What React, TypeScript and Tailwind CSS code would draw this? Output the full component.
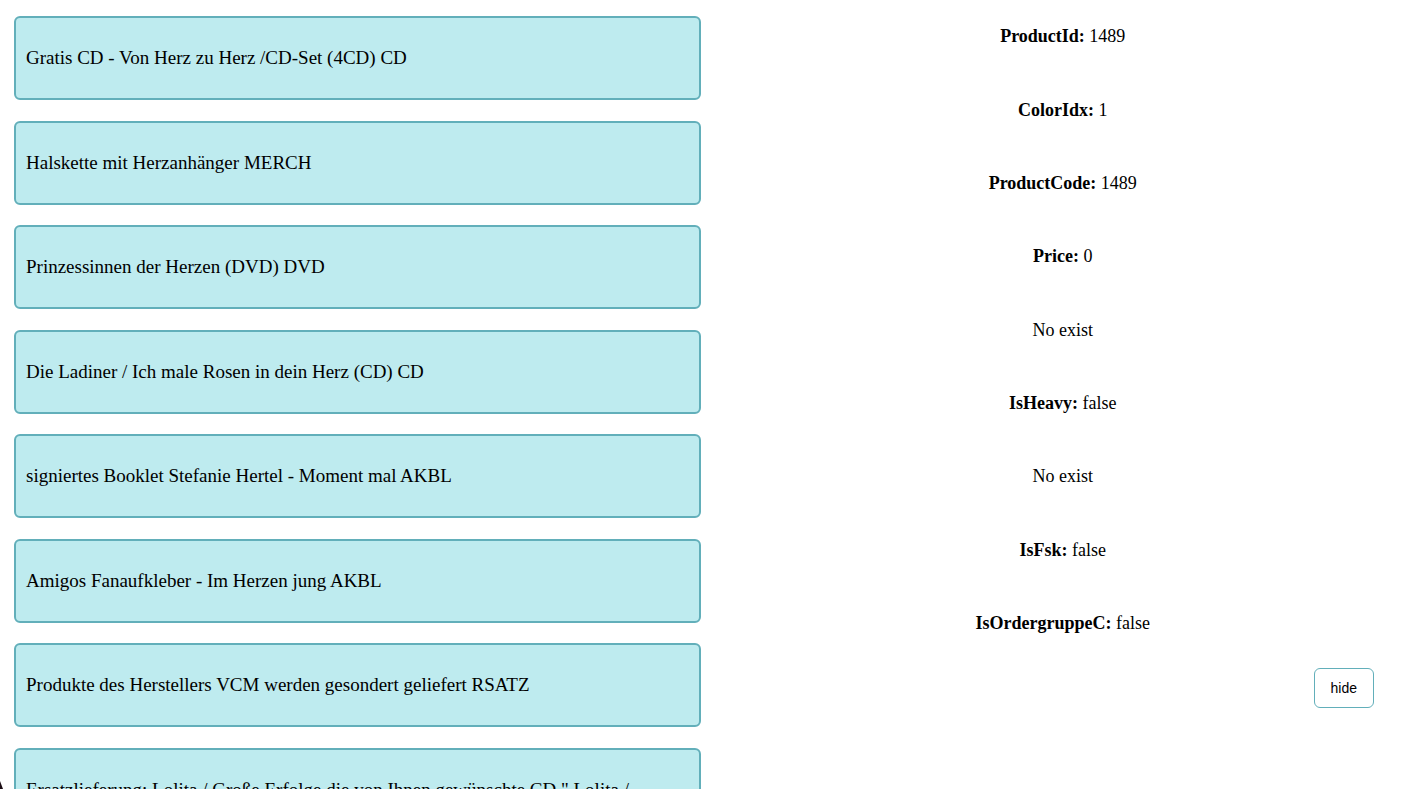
const products = [
  "Gratis CD - Von Herz zu Herz /CD-Set (4CD) CD",
  "Halskette mit Herzanhänger MERCH",
  "Prinzessinnen der Herzen (DVD) DVD",
  "Die Ladiner / Ich male Rosen in dein Herz (CD) CD",
  "signiertes Booklet Stefanie Hertel - Moment mal AKBL",
  "Amigos Fanaufkleber - Im Herzen jung AKBL",
  "Produkte des Herstellers VCM werden gesondert geliefert RSATZ",
  'Ersatzlieferung: Lolita / Große Erfolge die von Ihnen gewünschte CD " Lolita /',
];

const details: { label?: string; value: string }[] = [
  { label: "ProductId:", value: "1489" },
  { label: "ColorIdx:", value: "1" },
  { label: "ProductCode:", value: "1489" },
  { label: "Price:", value: "0" },
  { value: "No exist" },
  { label: "IsHeavy:", value: "false" },
  { value: "No exist" },
  { label: "IsFsk:", value: "false" },
  { label: "IsOrdergruppeC:", value: "false" },
];

export default function App() {
  return (
    <main className="relative grid h-screen grid-cols-2 overflow-hidden bg-white font-['Liberation_Serif',serif] text-black">
      <ul className="flex flex-col gap-5 pt-4 pr-3 pl-3.5 text-[19px] leading-6">
        {products.map((name) => (
          <li
            key={name}
            className="shrink-0 rounded-md border-2 border-[#62afba] bg-[#beebef] px-2.5 py-7 odd:mb-px"
          >
            {name}
          </li>
        ))}
      </ul>
      <section className="flex flex-col pt-6 pr-3 text-lg leading-6">
        <div className="flex flex-col gap-[49px] text-center">
          {details.map((item, index) => (
            <p key={index} className="[&:nth-child(3n+1)]:mb-px">
              {item.label && <b>{item.label}</b>} {item.value}
            </p>
          ))}
        </div>
        <button
          type="button"
          className="mt-[33px] mr-[39px] self-end rounded-md border border-[#62afba] bg-white px-4 py-2.5 font-['Liberation_Sans',sans-serif] text-sm leading-[18px]"
        >
          hide
        </button>
      </section>
      <svg
        className="absolute bottom-0 left-0"
        width="3"
        height="8"
        viewBox="0 0 3 8"
        aria-hidden="true"
      >
        <path d="M0 0L3 8H0Z" fill="#1b0d14" />
      </svg>
    </main>
  );
}
